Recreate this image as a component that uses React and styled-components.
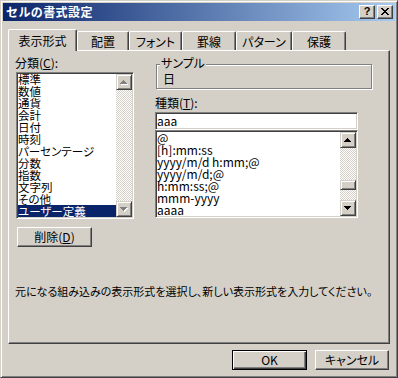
import React from "react"
import styled, { createGlobalStyle } from "styled-components"

const FACE = "#d4d0c8"
const SHADOW = "#808080"
const DARK = "#404040"
const NAVY = "#0a246a"

const GlobalStyle = createGlobalStyle`
  html, body {
    margin: 0;
    padding: 0;
    background: ${FACE};
  }
  body {
    font-family: "Noto Sans CJK JP", "Noto Sans", sans-serif;
    font-size: 12px;
    line-height: 12px;
    color: #000;
    font-feature-settings: "palt";
  }
  * {
    box-sizing: border-box;
  }
`

const Window = styled.div`
  width: 398px;
  height: 378px;
  padding: 2px;
  background: ${FACE};
  border: 1px solid;
  border-color: ${FACE} ${DARK} ${DARK} ${FACE};
  box-shadow: inset 1px 1px #fff, inset -1px -1px ${SHADOW};
  display: flex;
  flex-direction: column;
`

const TitleBar = styled.div`
  flex: none;
  height: 18px;
  display: flex;
  align-items: center;
  padding: 0 2px 0 2px;
  background: linear-gradient(to right, ${NAVY}, #a6caf0);
`

const Title = styled.div`
  flex: 1;
  color: #fff;
  font-weight: bold;
  font-size: 12px;
  line-height: 14px;
  letter-spacing: 0.4px;
  padding-left: 1px;
  font-feature-settings: normal;
`

const CaptionButton = styled.div`
  width: 16px;
  height: 14px;
  margin-left: ${(p) => (p.$gap ? 2 : 0)}px;
  background: ${FACE};
  border: 1px solid;
  border-color: #fff ${DARK} ${DARK} #fff;
  box-shadow: inset -1px -1px ${SHADOW};
  display: flex;
  align-items: center;
  justify-content: center;
  font-family: "Liberation Sans", Arial, sans-serif;
  font-weight: bold;
  font-size: 11px;
  line-height: 11px;
  padding-bottom: 1px;
`

const Body = styled.div`
  padding: 8px 0 0 5px;
  display: flex;
  flex-direction: column;
`

const TabStrip = styled.div`
  position: relative;
  z-index: 1;
  display: flex;
  align-items: flex-end;
  height: 21px;
`

const Tab = styled.div`
  width: ${(p) => p.$w}px;
  height: ${(p) => (p.$active ? 22 : 19)}px;
  margin-bottom: ${(p) => (p.$active ? -1 : 0)}px;
  background: ${FACE};
  border-top: 1px solid #fff;
  border-left: 1px solid #fff;
  border-right: 1px solid ${DARK};
  border-radius: 2px 2px 0 0;
  box-shadow: inset -1px 0 ${SHADOW};
  display: flex;
  align-items: center;
  justify-content: center;
  padding-top: 1px;
  white-space: nowrap;
`

const Panel = styled.div`
  width: 382px;
  height: 294px;
  border: 1px solid;
  border-color: #fff ${DARK} ${DARK} #fff;
  box-shadow: inset -1px -1px ${SHADOW};
  padding: 6px 0 0 6px;
  display: flex;
  flex-direction: column;
`

const Columns = styled.div`
  display: flex;
  gap: 21px;
`

const Column = styled.div`
  display: flex;
  flex-direction: column;
  align-items: flex-start;
`

const Label = styled.div`
  height: 12px;
  line-height: 12px;
  margin-top: ${(p) => p.$top || 0}px;
  white-space: nowrap;
`

const ListBox = styled.div`
  width: ${(p) => p.$w}px;
  height: ${(p) => p.$h}px;
  margin-top: ${(p) => p.$top || 0}px;
  margin-left: ${(p) => p.$left || 0}px;
  background: #fff;
  border: 1px solid;
  border-color: ${SHADOW} #fff #fff ${SHADOW};
  box-shadow: inset 1px 1px ${DARK}, inset -1px -1px ${FACE};
  padding: 1px;
  display: flex;
`

const Items = styled.div`
  flex: 1;
  min-width: 0;
  overflow: hidden;
  display: flex;
  flex-direction: column;
  justify-content: ${(p) => (p.$bottom ? "flex-end" : "flex-start")};
  font-size: ${(p) => p.$size || 12}px;
`

const Item = styled.div`
  flex: none;
  height: 12px;
  line-height: 12px;
  white-space: nowrap;
  background: ${(p) => (p.$selected ? NAVY : "transparent")};
  color: ${(p) => (p.$selected ? "#fff" : "#000")};
`

const ScrollBar = styled.div`
  flex: none;
  width: 16px;
  display: flex;
  flex-direction: column;
`

const Track = styled.div`
  flex: 1;
  background: repeating-conic-gradient(#fff 0 25%, ${FACE} 0 50%) 0 0 / 2px 2px;
`

const Thumb = styled.div`
  width: 16px;
  height: 10px;
  margin-top: 32px;
  background: ${FACE};
  border: 1px solid;
  border-color: ${FACE} ${DARK} ${DARK} ${FACE};
  box-shadow: inset 1px 1px #fff, inset -1px -1px ${SHADOW};
`

const ArrowButton = styled.div`
  flex: none;
  width: 16px;
  height: 16px;
  background: ${FACE};
  border: 1px solid;
  border-color: ${FACE} ${DARK} ${DARK} ${FACE};
  box-shadow: inset 1px 1px #fff, inset -1px -1px ${SHADOW};
  display: flex;
  align-items: center;
  justify-content: center;
`

const GroupBox = styled.div`
  position: relative;
  width: 216px;
  height: 25px;
  margin-top: 7px;
  margin-left: 1px;
  border: 1px solid ${SHADOW};
  box-shadow: 1px 1px #fff, inset 1px 1px #fff;
  padding: 8px 0 0 6px;
  line-height: 12px;
`

const Legend = styled.div`
  position: absolute;
  top: -8px;
  left: 3px;
  padding: 0 1px;
  background: ${FACE};
  line-height: 12px;
`

const TextField = styled.div`
  width: 203px;
  height: 18px;
  margin-top: 3px;
  background: #fff;
  border: 1px solid;
  border-color: ${SHADOW} #fff #fff ${SHADOW};
  box-shadow: inset 1px 1px ${DARK}, inset -1px -1px ${FACE};
  padding: 0 1px;
  display: flex;
  align-items: center;
`

const Button = styled.div`
  width: ${(p) => p.$w}px;
  height: 20px;
  margin-top: ${(p) => p.$top || 0}px;
  margin-left: ${(p) => p.$left || 0}px;
  background: ${FACE};
  border: 1px solid;
  border-color: ${(p) => (p.$default ? "#000" : `#fff ${DARK} ${DARK} #fff`)};
  box-shadow: ${(p) =>
    p.$default
      ? `inset 1px 1px #fff, inset -1px -1px ${DARK}, inset -2px -2px ${SHADOW}`
      : `inset -1px -1px ${SHADOW}`};
  display: flex;
  align-items: center;
  justify-content: center;
  white-space: nowrap;
`

const Description = styled.div`
  margin-top: 38px;
  font-size: 11px;
  line-height: 12px;
  white-space: nowrap;
`

const Footer = styled.div`
  width: 382px;
  margin-top: 6px;
  padding-right: 1px;
  display: flex;
  justify-content: flex-end;
  gap: 8px;
`

const Triangle = ({ down, disabled }) => {
  const rows = down
    ? "M0 0h7v1H0z M1 1h5v1H1z M2 2h3v1H2z M3 3h1v1H3z"
    : "M3 0h1v1H3z M2 1h3v1H2z M1 2h5v1H1z M0 3h7v1H0z"
  return (
    <svg width="8" height="5" viewBox="0 0 8 5" shapeRendering="crispEdges">
      {disabled && <path d={rows} fill="#fff" transform="translate(1 1)" />}
      <path d={rows} fill={disabled ? SHADOW : "#000"} />
    </svg>
  )
}

const CloseGlyph = () => (
  <svg width="8" height="7" viewBox="0 0 8 7" shapeRendering="crispEdges">
    <path
      d="M0 0h2v1H0z M6 0h2v1H6z M1 1h2v1H1z M5 1h2v1H5z M2 2h4v1H2z M3 3h2v1H3z M2 4h4v1H2z M1 5h2v1H1z M5 5h2v1H5z M0 6h2v1H0z M6 6h2v1H6z"
      fill="#000"
    />
  </svg>
)

const tabs = [
  { label: "表示形式", w: 69, active: true },
  { label: "配置", w: 52 },
  { label: "フォント", w: 53 },
  { label: "罫線", w: 54 },
  { label: "パターン", w: 56 },
  { label: "保護", w: 54 },
]

const categories = [
  "標準",
  "数値",
  "通貨",
  "会計",
  "日付",
  "時刻",
  "パーセンテージ",
  "分数",
  "指数",
  "文字列",
  "その他",
  "ユーザー定義",
]

const formats = [
  "@",
  "[h]:mm:ss",
  "yyyy/m/d h:mm;@",
  "yyyy/m/d;@",
  "h:mm:ss;@",
  "mmm-yyyy",
  "aaaa",
]

const App = () => {
  return (
    <>
      <GlobalStyle />
      <Window>
        <TitleBar>
          <Title>セルの書式設定</Title>
          <CaptionButton>?</CaptionButton>
          <CaptionButton $gap>
            <CloseGlyph />
          </CaptionButton>
        </TitleBar>
        <Body>
          <TabStrip>
            {tabs.map((t) => (
              <Tab key={t.label} $w={t.w} $active={t.active}>
                {t.label}
              </Tab>
            ))}
          </TabStrip>
          <Panel>
            <Columns>
              <Column>
                <Label>
                  分類(<u>C</u>):
                </Label>
                <ListBox $w={118} $h={147} $top={3} $left={1}>
                  <Items $bottom $size={11.5}>
                    {categories.map((c) => (
                      <Item key={c} $selected={c === "ユーザー定義"}>
                        {c}
                      </Item>
                    ))}
                  </Items>
                  <ScrollBar>
                    <ArrowButton>
                      <Triangle disabled />
                    </ArrowButton>
                    <Track />
                    <ArrowButton>
                      <Triangle down disabled />
                    </ArrowButton>
                  </ScrollBar>
                </ListBox>
                <Button $w={75} $top={8} $left={2}>
                  削除(<u>D</u>)
                </Button>
              </Column>
              <Column>
                <GroupBox>
                  <Legend>サンプル</Legend>
                  日
                </GroupBox>
                <Label $top={8}>
                  種類(<u>T</u>):
                </Label>
                <TextField>aaa</TextField>
                <ListBox $w={203} $h={88}>
                  <Items $size={12}>
                    {formats.map((f) => (
                      <Item key={f}>{f}</Item>
                    ))}
                  </Items>
                  <ScrollBar>
                    <ArrowButton>
                      <Triangle />
                    </ArrowButton>
                    <Track>
                      <Thumb />
                    </Track>
                    <ArrowButton>
                      <Triangle down />
                    </ArrowButton>
                  </ScrollBar>
                </ListBox>
              </Column>
            </Columns>
            <Description>
              元になる組み込みの表示形式を選択し、新しい表示形式を入力してください。
            </Description>
          </Panel>
          <Footer>
            <Button $w={75} $default>
              OK
            </Button>
            <Button $w={74}>キャンセル</Button>
          </Footer>
        </Body>
      </Window>
    </>
  )
}

export default App
